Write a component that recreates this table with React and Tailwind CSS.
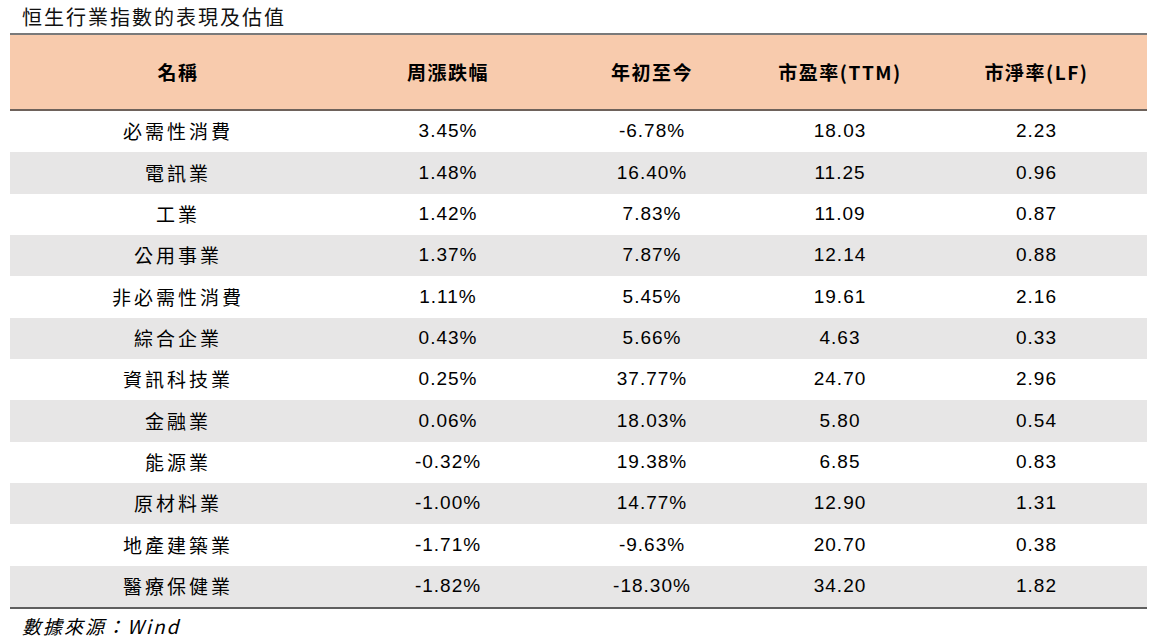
import React from 'react';

const rows = [
  ['必需性消費', '3.45%', '-6.78%', '18.03', '2.23'],
  ['電訊業', '1.48%', '16.40%', '11.25', '0.96'],
  ['工業', '1.42%', '7.83%', '11.09', '0.87'],
  ['公用事業', '1.37%', '7.87%', '12.14', '0.88'],
  ['非必需性消費', '1.11%', '5.45%', '19.61', '2.16'],
  ['綜合企業', '0.43%', '5.66%', '4.63', '0.33'],
  ['資訊科技業', '0.25%', '37.77%', '24.70', '2.96'],
  ['金融業', '0.06%', '18.03%', '5.80', '0.54'],
  ['能源業', '-0.32%', '19.38%', '6.85', '0.83'],
  ['原材料業', '-1.00%', '14.77%', '12.90', '1.31'],
  ['地產建築業', '-1.71%', '-9.63%', '20.70', '0.38'],
  ['醫療保健業', '-1.82%', '-18.30%', '34.20', '1.82'],
];

const cols = ['w-[336px]', 'w-[204px]', 'w-[204px]', 'w-[172px]', 'w-[221px]'];
const headers = ['名稱', '周漲跌幅', '年初至今', '市盈率(TTM)', '市淨率(LF)'];

// numbers use a narrow sans, names a CJK face
const cjk = "font-['Noto_Sans_CJK_TC','Noto_Sans_CJK_SC',sans-serif]";
const num = "font-['Liberation_Sans_Narrow','Liberation_Sans','Noto_Sans_CJK_SC',sans-serif]";

export default function App() {
  return (
    <div className="w-[1157px] h-[643px] bg-white text-black flex flex-col overflow-hidden">
      <div className={`h-[33px] pl-[22px] flex items-center text-[20px] tracking-[2px] text-[#111] ${cjk}`}>
        恒生行業指數的表現及估值
      </div>

      <div className="ml-[10px] w-[1137px] flex flex-col">
        {/* header */}
        <div className="h-[78px] bg-[#F8CBAD] border-t-2 border-b-2 border-t-[#7a7a7a] border-b-[#6e625b] flex items-center">
          {headers.map((h, i) => (
            <div key={h} className={`${cols[i]} text-center text-[19px] font-bold tracking-[1.5px] ${cjk}`}>
              {h}
            </div>
          ))}
        </div>

        {/* body */}
        {rows.map((r, ri) => (
          <div
            key={r[0]}
            className={`h-[41.33px] flex items-center ${ri % 2 === 1 ? 'bg-[#E7E6E6]' : 'bg-white'}`}
          >
            {r.map((c, ci) => (
              <div
                key={ci}
                className={`${cols[ci]} text-center ${ci === 0 ? `text-[19px] tracking-[3px] ${cjk}` : `text-[19px] tracking-[1px] ${num}`}`}
              >
                {c}
              </div>
            ))}
          </div>
        ))}
        <div className="h-[2px] bg-[#5f5f5f]" />
      </div>

      <div className={`pl-[22px] h-[34px] flex items-center text-[19px] italic tracking-[2px] ${cjk}`}>
        數據來源：Wind
      </div>
    </div>
  );
}
